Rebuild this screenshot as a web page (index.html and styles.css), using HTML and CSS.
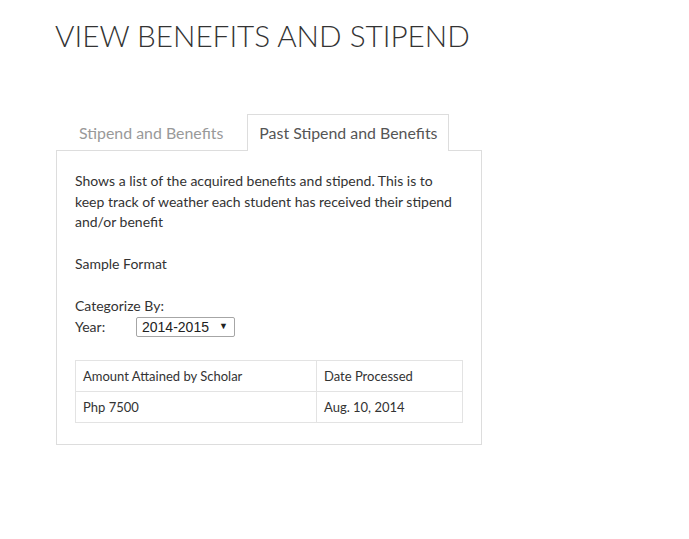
FILE: index.html
```html
<!DOCTYPE html>
<html lang="en">
<head>
    <meta charset="UTF-8">
    <title>View Benefits and Stipend</title>
    <link rel="stylesheet" href="styles.css">
</head>
<body>
<div class="page">
    <h1 class="title">VIEW BENEFITS AND STIPEND</h1>

    <ul class="tab-header">
        <li class="tab-link">Stipend and Benefits</li>
        <li class="tab-link active">Past Stipend and Benefits</li>
    </ul>

    <div class="tab-box">
        <p class="intro">Shows a list of the acquired benefits and stipend. This is to keep track of weather each student has received their stipend and/or benefit</p>

        <p class="sample">Sample Format</p>

        <div class="filter">
            <div>Categorize By:</div>
            <div class="filter-row">
                <label for="year" class="year-label">Year:</label>
                <div class="select-wrap">
                    <select id="year">
                        <option>2014-2015</option>
                        <option>2013-2014</option>
                    </select>
                </div>
            </div>
        </div>

        <table class="records">
            <tr>
                <td class="col-amount">Amount Attained by Scholar</td>
                <td>Date Processed</td>
            </tr>
            <tr>
                <td>Php 7500</td>
                <td>Aug. 10, 2014</td>
            </tr>
        </table>
    </div>
</div>
</body>
</html>
```

FILE: styles.css
```css
body {
    margin: 0;
    font-family: Lato, "Open Sans", sans-serif;
    font-size: 14px;
    color: #333;
    background-color: #fff;
}

.page {
    width: 426px;
    padding: 18px 0 0 56px;
}

.title {
    font-weight: 300;
    font-size: 29.7px;
    line-height: 36px;
    margin: 0 0 60px -1px;
    white-space: nowrap;
    color: #333;
}

.tab-header {
    display: flex;
    list-style: none;
    margin: 0 0 -1px 0;
    padding: 0 0 0 11px;
}

.tab-link {
    font-size: 15.9px;
    line-height: 20px;
    padding: 8px 11px 7px 11px;
    color: #999;
    border: 1px solid transparent;
    border-bottom: none;
    margin-right: 12px;
    white-space: nowrap;
}

.tab-link.active {
    color: #555;
    background-color: #fff;
    border-color: #ddd;
    padding-bottom: 8px;
}

.tab-box {
    border: 1px solid #ddd;
    padding: 20px 18px 21px 18px;
}

.intro {
    margin: 0;
    line-height: 20.5px;
}

.sample {
    margin: 21px 0 0 0;
    line-height: 20.5px;
}

.filter {
    margin-top: 22px;
    line-height: 20.5px;
}

.filter-row {
    display: flex;
    align-items: center;
}

.year-label {
    width: 61px;
}

.select-wrap {
    position: relative;
}

.select-wrap select {
    appearance: none;
    -webkit-appearance: none;
    font-family: "Liberation Sans", Arial, sans-serif;
    font-size: 14px;
    color: #222;
    width: 99px;
    height: 20px;
    padding: 0 0 0 5px;
    border: 1px solid #a6a6a6;
    border-radius: 2px;
    background-color: #fff;
}

.select-wrap::after {
    content: "\25BC";
    position: absolute;
    right: 7px;
    top: 4px;
    font-size: 9px;
    line-height: 10px;
    color: #222;
    pointer-events: none;
}

.records {
    width: 100%;
    margin-top: 23px;
    border-collapse: collapse;
    font-size: 13px;
}

.records td {
    border: 1px solid #e3e3e3;
    padding: 0 7px;
    height: 30px;
}

.col-amount {
    width: 226px;
}
```
